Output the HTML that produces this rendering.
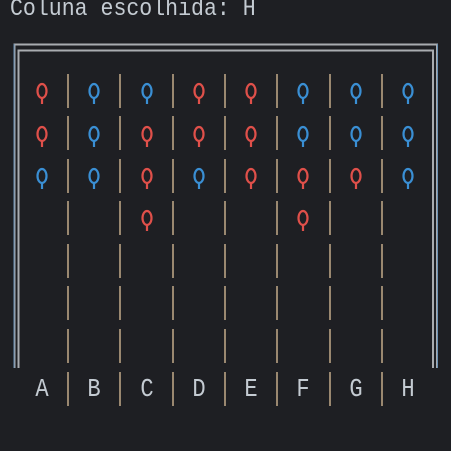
<!DOCTYPE html>
<html><head><meta charset="utf-8"><style>
html,body{margin:0;padding:0;background:#1e1f23;width:451px;height:451px;overflow:hidden}
svg{display:block}
</style></head><body>
<svg width="451" height="451" viewBox="0 0 451 451" xmlns="http://www.w3.org/2000/svg">
<rect width="451" height="451" fill="#1e1f23"/>
<text x="0" y="0" transform="translate(10,15) scale(0.88,1)" font-family="Liberation Mono, monospace" font-size="24.5" fill="#c4cbd2">Coluna escolhida: H</text>
<g fill="none" stroke="#a9acb0" stroke-width="2">
<path d="M14.5 368 V44.5 H437 V368"/>
<path d="M18.5 368 V50.5 H433 V368"/>
</g>
<g fill="none" stroke="#5a8bb5" stroke-width="1" opacity="0.8">
<path d="M14 368 V44 M437.5 44 V368"/>
</g>
<g id="seps" stroke-width="2"></g>
<g id="pins" fill="none" stroke-width="2.2"></g>
<g font-family="Liberation Mono, monospace" font-size="26" fill="#c4cbd2" text-anchor="middle" id="lets"></g>
<script>
var ns="http://www.w3.org/2000/svg";
var sx=[68,120,173,225,277,330,382];
var rows=[74,116,159,201,244,286,329,372];
var s=document.getElementById('seps');
function ln(par,x1,y1,x2,y2,col){var l=document.createElementNS(ns,'line');l.setAttribute('x1',x1);l.setAttribute('x2',x2);l.setAttribute('y1',y1);l.setAttribute('y2',y2);l.setAttribute('stroke',col);par.appendChild(l);}
rows.forEach(function(y){sx.forEach(function(x){ln(s,x,y,x,y+34,'#9a8870');});});
var cx=[42,94,147,199,251,303,356,408];
var L="ABCDEFGH",lt=document.getElementById('lets');
for(var k=0;k<8;k++){var t=document.createElementNS(ns,'text');t.setAttribute('transform','translate('+cx[k]+',396) scale(0.85,1)');t.textContent=L[k];lt.appendChild(t);}
var g=["RBBRRBBB","RBRRRBBB","BBRBRRRB","__R__R__"];
var cy=[91,134,176,218];
var p=document.getElementById('pins');
g.forEach(function(r,i){for(var j=0;j<8;j++){var c=r[j];if(c=='_')continue;var col=c=='R'?'#e0504a':'#3a8fd4';
var e=document.createElementNS(ns,'ellipse');e.setAttribute('cx',cx[j]);e.setAttribute('cy',cy[i]);e.setAttribute('rx',4.5);e.setAttribute('ry',7);e.setAttribute('stroke',col);p.appendChild(e);
ln(p,cx[j],cy[i]+7,cx[j],cy[i]+13,col);}});
</script>
</svg>
</body></html>
